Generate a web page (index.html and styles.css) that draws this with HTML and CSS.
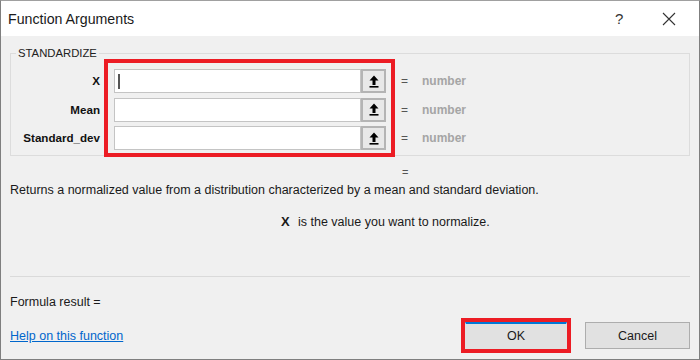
FILE: index.html
```html
<!DOCTYPE html>
<html>
<head>
<meta charset="utf-8">
<link rel="stylesheet" href="styles.css">
</head>
<body>
<div class="window">
  <div class="titlebar">
    <span class="title">Function Arguments</span>
    <span class="help-btn">?</span>
    <span class="close-btn">
      <svg width="14" height="14" viewBox="0 0 14 14"><path d="M1 1 L13 13 M13 1 L1 13" stroke="#333" stroke-width="1.1" fill="none"/></svg>
    </span>
  </div>
  <div class="main">
    <fieldset class="group">
      <legend class="legend">STANDARDIZE</legend>
      <div class="args">
        <div class="labels">
          <div class="label">X</div>
          <div class="label">Mean</div>
          <div class="label">Standard_dev</div>
        </div>
        <div class="inputs">
          <div class="field-row"><div class="field"><span class="caret"></span></div><div class="ref-btn"><svg width="10" height="13" viewBox="0 0 10 13"><path d="M5 0.5 L9.5 5.5 L6.5 5.5 L6.5 10 L3.5 10 L3.5 5.5 L0.5 5.5 Z" fill="#000"/><rect x="0.5" y="11" width="9" height="1.6" fill="#000"/></svg></div></div>
          <div class="field-row"><div class="field"></div><div class="ref-btn"><svg width="10" height="13" viewBox="0 0 10 13"><path d="M5 0.5 L9.5 5.5 L6.5 5.5 L6.5 10 L3.5 10 L3.5 5.5 L0.5 5.5 Z" fill="#000"/><rect x="0.5" y="11" width="9" height="1.6" fill="#000"/></svg></div></div>
          <div class="field-row"><div class="field"></div><div class="ref-btn"><svg width="10" height="13" viewBox="0 0 10 13"><path d="M5 0.5 L9.5 5.5 L6.5 5.5 L6.5 10 L3.5 10 L3.5 5.5 L0.5 5.5 Z" fill="#000"/><rect x="0.5" y="11" width="9" height="1.6" fill="#000"/></svg></div></div>
        </div>
        <div class="results">
          <div class="result"><span class="eq">=</span><span class="type">number</span></div>
          <div class="result"><span class="eq">=</span><span class="type">number</span></div>
          <div class="result"><span class="eq">=</span><span class="type">number</span></div>
        </div>
      </div>
    </fieldset>
    <div class="eq-line">=</div>
    <div class="desc">Returns a normalized value from a distribution characterized by a mean and standard deviation.</div>
    <div class="argdesc"><b class="argname">X</b><span>is the value you want to normalize.</span></div>
    <div class="separator"></div>
    <div class="formula">Formula result =</div>
    <div class="footer">
      <a class="help-link" href="#">Help on this function</a>
      <button class="btn btn-ok">OK</button>
      <button class="btn btn-cancel">Cancel</button>
    </div>
  </div>
</div>
</body>
</html>
```

FILE: styles.css
```css
html, body {
  margin: 0;
  padding: 0;
  background: #ffffff;
}
body {
  width: 700px;
  height: 360px;
  overflow: hidden;
  font-family: "Liberation Sans", Arial, sans-serif;
  font-size: 12.5px;
  color: #1a1a1a;
}
.window {
  box-sizing: border-box;
  width: 700px;
  height: 360px;
  border: 1px solid #7f7f7f;
  border-top-color: #a0a0a0;
  background: #f0f0f0;
  display: flex;
  flex-direction: column;
}
.titlebar {
  height: 35px;
  background: #ffffff;
  display: flex;
  align-items: center;
  padding-left: 7px;
  flex-shrink: 0;
}
.title {
  font-size: 14.2px;
  color: #1a1a1a;
}
.help-btn {
  margin-left: auto;
  font-size: 15px;
  color: #333;
  width: 14px;
}
.close-btn {
  margin-left: 33px;
  margin-right: 23px;
  display: flex;
  align-items: center;
}
.main {
  padding: 0 9px 0 9px;
  display: flex;
  flex-direction: column;
}
.group {
  margin: 10px 0 0 0;
  padding: 3px 0 2px 0;
  border: 1px solid #dcdcdc;
  min-width: 0;
}
.legend {
  margin-left: 5px;
  padding: 0 2px;
  font-size: 11.3px;
  line-height: 14px;
  color: #222;
}
.args {
  display: flex;
}
.labels {
  width: 89px;
  padding-top: 6px;
  display: flex;
  flex-direction: column;
  gap: 4.5px;
}
.label {
  height: 24px;
  line-height: 24px;
  text-align: right;
  font-weight: bold;
  font-size: 11.6px;
  color: #111;
}
.inputs {
  box-sizing: border-box;
  width: 283px;
  margin-left: 8px;
  padding: 6px 5px 3px 6px;
  outline: 4px solid #ec1c24;
  display: flex;
  flex-direction: column;
  gap: 4.5px;
  position: relative;
  z-index: 1;
}
.field-row {
  height: 24px;
  display: flex;
}
.field {
  flex: 1;
  box-sizing: border-box;
  background: #ffffff;
  border: 1px solid #c4c4c4;
  display: flex;
  align-items: center;
}
.caret {
  width: 1.5px;
  height: 15px;
  background: #555;
  margin-left: 3px;
}
.ref-btn {
  box-sizing: border-box;
  width: 25px;
  height: 24px;
  background: #e8e8e8;
  border: 2px solid #b4b4b4;
  display: flex;
  align-items: center;
  justify-content: center;
}
.results {
  margin-left: 10px;
  padding-top: 6px;
  display: flex;
  flex-direction: column;
  gap: 4.5px;
}
.result {
  height: 24px;
  display: flex;
  align-items: center;
  font-size: 12px;
}
.eq {
  width: 6px;
  color: #555;
}
.type {
  margin-left: 15px;
  color: #a5a5a5;
  font-weight: bold;
}
.eq-line {
  margin-top: 8px;
  height: 16px;
  line-height: 16px;
  padding-left: 392px;
  color: #555;
  font-size: 11px;
}
.desc {
  margin-top: 2px;
  line-height: 16px;
}
.argdesc {
  margin-top: 16px;
  line-height: 16px;
  padding-left: 271px;
  display: flex;
}
.argname {
  width: 17px;
  font-size: 13px;
}
.separator {
  margin-top: 46px;
  border-top: 1px solid #dadada;
}
.formula {
  margin-top: 17px;
  line-height: 16px;
}
.footer {
  margin-top: 12px;
  height: 27px;
  display: flex;
  align-items: center;
}
.help-link {
  color: #0066cc;
  text-decoration: underline;
}
.btn {
  box-sizing: border-box;
  height: 27px;
  font-family: "Liberation Sans", Arial, sans-serif;
  font-size: 12.5px;
  color: #1a1a1a;
  background: #e1e1e1;
  border: 1px solid #adadad;
  padding: 0;
}
.btn-ok {
  margin-left: auto;
  width: 102px;
  border: 1px solid #e1e1e1;
  border-top: 2px solid #0078d7;
  outline: 4px solid #ec1c24;
}
.btn-cancel {
  margin-left: 18px;
  width: 105px;
}
```
